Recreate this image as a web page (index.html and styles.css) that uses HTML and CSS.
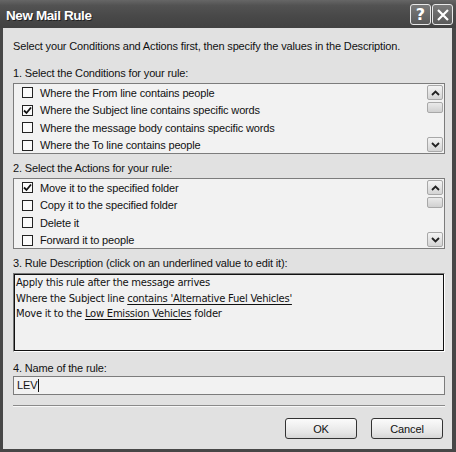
FILE: index.html
```html
<!DOCTYPE html>
<html>
<head>
<meta charset="utf-8">
<link rel="stylesheet" href="styles.css">
</head>
<body>
<div class="window">
  <div class="titlebar">
    <span class="title">New Mail Rule</span>
    <div class="tbtns">
      <span class="tbtn">?</span>
      <span class="tbtn close"><svg width="14" height="14" viewBox="0 0 14 14"><path d="M2 2L12 12M12 2L2 12" stroke="#fff" stroke-width="2.2" fill="none"/></svg></span>
    </div>
  </div>
  <div class="content">
    <div class="intro">Select your Conditions and Actions first, then specify the values in the Description.</div>
    <div class="label l1">1. Select the Conditions for your rule:</div>
    <div class="listbox">
      <div class="rows">
        <div class="row"><span class="cb"></span>Where the From line contains people</div>
        <div class="row"><span class="cb checked"><svg width="9" height="9" viewBox="0 0 9 9"><path d="M1 4.5L3.5 7L8 1.5" stroke="#111" stroke-width="1.8" fill="none"/></svg></span>Where the Subject line contains specific words</div>
        <div class="row"><span class="cb"></span>Where the message body contains specific words</div>
        <div class="row"><span class="cb"></span>Where the To line contains people</div>
      </div>
      <div class="scroll">
        <span class="sbtn"><svg width="9" height="6" viewBox="0 0 9 6"><path d="M1 5L4.5 1.5L8 5" stroke="#222" stroke-width="1.8" fill="none"/></svg></span>
        <span class="thumb"></span>
        <span class="track"></span>
        <span class="sbtn"><svg width="9" height="6" viewBox="0 0 9 6"><path d="M1 1L4.5 4.5L8 1" stroke="#222" stroke-width="1.8" fill="none"/></svg></span>
      </div>
    </div>
    <div class="label l2">2. Select the Actions for your rule:</div>
    <div class="listbox">
      <div class="rows">
        <div class="row"><span class="cb checked"><svg width="9" height="9" viewBox="0 0 9 9"><path d="M1 4.5L3.5 7L8 1.5" stroke="#111" stroke-width="1.8" fill="none"/></svg></span>Move it to the specified folder</div>
        <div class="row"><span class="cb"></span>Copy it to the specified folder</div>
        <div class="row"><span class="cb"></span>Delete it</div>
        <div class="row"><span class="cb"></span>Forward it to people</div>
      </div>
      <div class="scroll">
        <span class="sbtn"><svg width="9" height="6" viewBox="0 0 9 6"><path d="M1 5L4.5 1.5L8 5" stroke="#222" stroke-width="1.8" fill="none"/></svg></span>
        <span class="thumb"></span>
        <span class="track"></span>
        <span class="sbtn"><svg width="9" height="6" viewBox="0 0 9 6"><path d="M1 1L4.5 4.5L8 1" stroke="#222" stroke-width="1.8" fill="none"/></svg></span>
      </div>
    </div>
    <div class="label l3">3. Rule Description (click on an underlined value to edit it):</div>
    <div class="desc">
      <div>Apply this rule after the message arrives</div>
      <div>Where the Subject line <u>contains 'Alternative Fuel Vehicles'</u></div>
      <div>Move it to the <u>Low Emission Vehicles</u> folder</div>
    </div>
    <div class="label l4">4. Name of the rule:</div>
    <div class="input">LEV<span class="caret"></span></div>
    <div class="sep"></div>
    <div class="buttons">
      <span class="btn">OK</span>
      <span class="btn">Cancel</span>
    </div>
  </div>
</div>
</body>
</html>
```
FILE: styles.css
```css
html, body { margin: 0; padding: 0; }
body { width: 456px; height: 452px; overflow: hidden; background: #3a3a3a; font-family: "Liberation Sans", Arial, sans-serif; }
.window { width: 456px; height: 452px; display: flex; flex-direction: column; background: #474747; box-sizing: border-box; }
.titlebar { height: 28px; flex: none; display: flex; align-items: center; justify-content: space-between; background: linear-gradient(#666 0%, #525252 20%, #484848 60%, #424242 100%); padding: 0 3px 0 6px; }
.title { color: #fff; font-weight: bold; font-size: 13.5px; letter-spacing: -0.4px; text-shadow: 1px 1px 0 #222; margin-top: 2px; }
.tbtns { display: flex; gap: 1px; margin-top: 1px; }
.tbtn { width: 19px; height: 19px; border: 1px solid #e8e8e8; border-radius: 3px; background: linear-gradient(#7a7a7a, #5a5a5a); color: #fff; font-weight: bold; font-size: 16px; display: flex; align-items: center; justify-content: center; font-family: "DejaVu Sans", sans-serif; }
.content { flex: 1; margin: 0 4px 3px 3px; background: #e1e1e1; padding: 0 7px 0 10px; font-size: 11px; letter-spacing: -0.15px; color: #111; display: flex; flex-direction: column; }
.intro { line-height: 14px; margin-top: 11px; }
.label { line-height: 14px; }
.l1 { margin-top: 13px; }
.l2, .l3 { margin-top: 7px; }
.l4 { margin-top: 9px; }
.listbox { margin-top: 3px; height: 71px; box-sizing: border-box; border: 1px solid #7c7c7c; background: #f2f2f2; display: flex; }
.rows { flex: 1; padding-top: 0; }
.row { height: 17.5px; display: flex; align-items: center; }
.cb { width: 9px; height: 9px; border: 1px solid #222; background: #fafafa; margin: 0 7px 0 8px; display: flex; align-items: center; justify-content: center; flex: none; }
.scroll { width: 16px; margin: 1px 1px 1px 0; display: flex; flex-direction: column; }
.sbtn { height: 15px; box-sizing: border-box; border: 1px solid #a8a8a8; border-radius: 2px; background: linear-gradient(#f4f4f4, #d4d4d4); display: flex; align-items: center; justify-content: center; }
.thumb { height: 11px; margin-top: 2px; box-sizing: border-box; border: 1px solid #a8a8a8; border-radius: 2px; background: linear-gradient(#eaeaea, #d0d0d0); }
.track { flex: 1; }
.desc { margin-top: 3px; height: 79px; box-sizing: border-box; border: 1px solid #777; border-right-color: #fff; border-bottom-color: #fff; box-shadow: inset 1px 1px 0 #111, inset -1px -1px 0 #111; background: #f1f1f1; padding: 1px 2px; font-family: "DejaVu Sans", Verdana, sans-serif; font-size: 10px; letter-spacing: -0.25px; line-height: 15.5px; color: #111; }
.desc u { text-decoration-thickness: 1px; text-underline-offset: 2px; }
.input { margin-top: 1px; height: 19px; box-sizing: border-box; border: 1px solid #7c7c7c; background: #f2f2f2; padding: 0 3px; line-height: 17px; display: flex; align-items: center; }
.caret { width: 1px; height: 13px; background: #111; margin-left: 1px; }
.sep { margin-top: 10px; height: 1px; background: #8a8a8a; border-bottom: 1px solid #f8f8f8; }
.buttons { margin-top: 11px; display: flex; justify-content: flex-end; gap: 14px; padding-right: 2px; }
.btn { width: 72px; height: 21px; box-sizing: border-box; border: 1px solid #333; border-radius: 3px; background: linear-gradient(#fbfbfb, #e6e6e6 70%, #d6d6d6); display: flex; align-items: center; justify-content: center; font-size: 11px; color: #111; }
```
